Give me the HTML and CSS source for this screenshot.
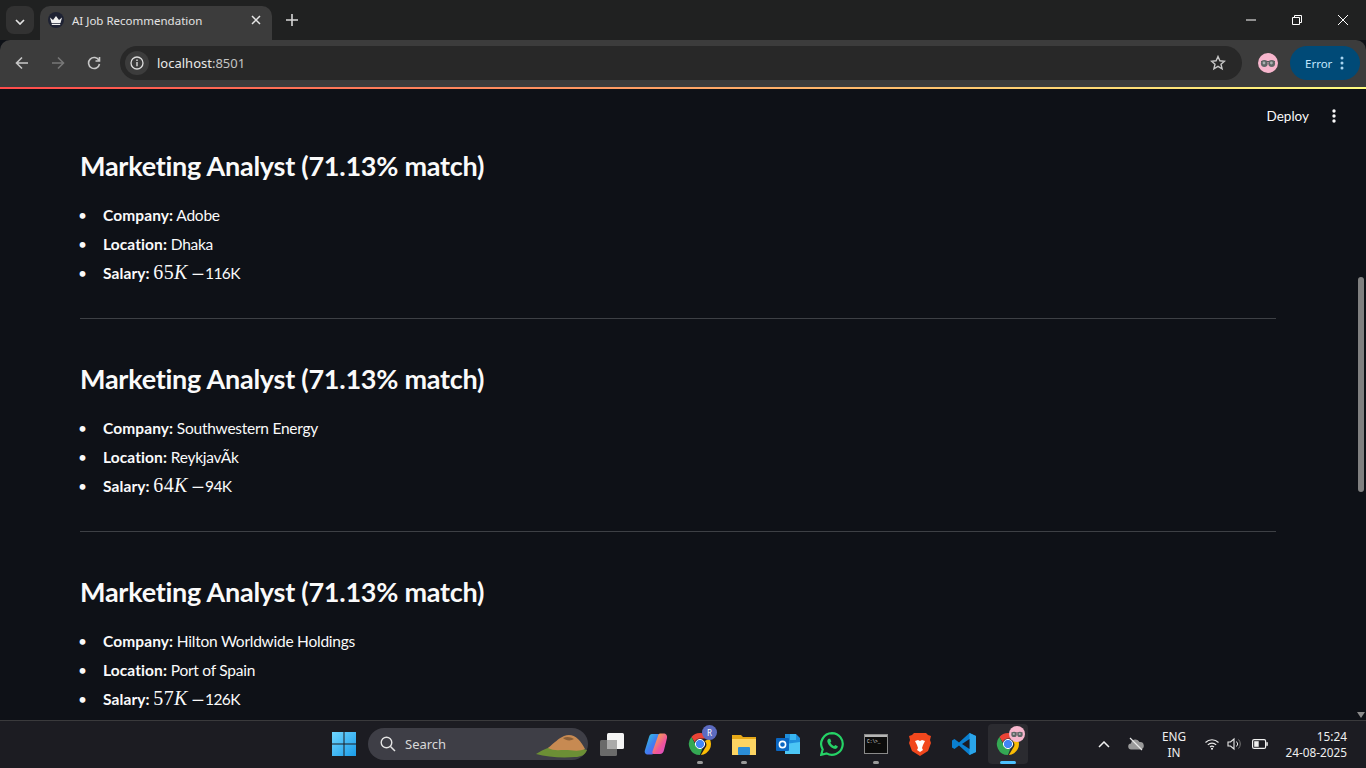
FILE: index.html
```html
<!DOCTYPE html>
<html lang="en">
<head>
    <meta charset="UTF-8">
    <title>AI Job Recommendation</title>
    <link rel="stylesheet" href="styles.css">
</head>
<body>
    <svg class="defs" width="0" height="0">
        <symbol id="chrome" viewBox="0 0 24 24">
            <path d="M12 1a11 11 0 0 1 9.500 5.500H12a5.500 5.500 0 0 0-5.200 3.700L3.400 5A11 11 0 0 1 12 1z" fill="#ea4335"/>
            <path d="M21.500 6.500A11 11 0 0 1 12.900 23l4-6.700A5.500 5.500 0 0 0 16.800 9z" fill="#fbbc04"/>
            <path d="M3.400 5l4.700 8.500a5.500 5.500 0 0 0 6.300 3.200L11.900 23A11 11 0 0 1 3.400 5z" fill="#34a853"/>
            <circle cx="12" cy="12" r="4.600" fill="#4285f4" stroke="#fff" stroke-width="1"/>
        </symbol>
        <symbol id="avatar" viewBox="0 0 20 20">
            <circle cx="10" cy="10" r="10" fill="#f7b6cd"/>
            <path d="M3 8.500h14" stroke="#555" stroke-width="1"/>
            <circle cx="6.300" cy="10.500" r="3.400" fill="#5f6666"/>
            <circle cx="13.700" cy="10.500" r="3.400" fill="#5f6666"/>
            <circle cx="6" cy="10" r="1.400" fill="#aab0b0"/>
            <circle cx="13.400" cy="10" r="1.400" fill="#aab0b0"/>
        </symbol>
    </svg>

    <div class="tabstrip">
        <button class="tab-search">
            <svg width="10" height="6" viewBox="0 0 10 6"><path d="M1 1l4 4 4-4" fill="none" stroke="#e3e3e3" stroke-width="1.700"/></svg>
        </button>
        <div class="tab">
            <span class="favicon">
                <svg width="12" height="9" viewBox="0 0 12 9"><path d="M0 1.500l3 2.500L6 0l3 4 3-2.500L10.500 7h-9zM1.800 7.800h8.400V9H1.800z" fill="#f0f0f0"/></svg>
            </span>
            <span class="tab-title">AI Job Recommendation</span>
            <svg class="tab-close" width="10" height="10" viewBox="0 0 10 10"><path d="M1 1l8 8M9 1l-8 8" stroke="#e6e6e6" stroke-width="1.500"/></svg>
        </div>
        <svg class="new-tab" width="12" height="12" viewBox="0 0 12 12"><path d="M6 0v12M0 6h12" stroke="#d8d8d8" stroke-width="1.600"/></svg>
        <div class="window-controls">
            <svg width="10" height="10" viewBox="0 0 10 10"><path d="M0 5h10" stroke="#fff" stroke-width="1"/></svg>
            <svg width="10" height="10" viewBox="0 0 10 10"><path d="M.5 2.500h7v7h-7zM2.500 2.500V.5h7v7H7.500" fill="none" stroke="#fff" stroke-width="1"/></svg>
            <svg width="10" height="10" viewBox="0 0 10 10"><path d="M0 0l10 10M10 0L0 10" stroke="#fff" stroke-width="1"/></svg>
        </div>
    </div>
    <div class="toolbar">
        <svg class="nav-icon" width="14" height="14" viewBox="0 0 14 14"><path d="M13 7H2M7 1.500L1.500 7 7 12.500" fill="none" stroke="#c7c7c7" stroke-width="1.600"/></svg>
        <svg class="nav-icon" width="14" height="14" viewBox="0 0 14 14"><path d="M1 7h11M7 1.500L12.500 7 7 12.500" fill="none" stroke="#777" stroke-width="1.600"/></svg>
        <svg class="nav-icon" width="14" height="14" viewBox="0 0 14 14"><path d="M12 4.500A5.500 5.500 0 1 0 12.500 8M12.500 1v4h-4" fill="none" stroke="#c7c7c7" stroke-width="1.600"/></svg>
        <div class="omnibox">
            <span class="site-info">
                <svg width="14" height="14" viewBox="0 0 14 14"><circle cx="7" cy="7" r="6" fill="none" stroke="#dcdcdc" stroke-width="1.300"/><path d="M7 6v4.200M7 3.600v1.300" stroke="#dcdcdc" stroke-width="1.400"/></svg>
            </span>
            <span class="url">localhost<span class="url-port">:8501</span></span>
            <svg class="star" width="16" height="16" viewBox="0 0 16 16"><path d="M8 1.500l1.900 4.300 4.600.4-3.500 3 1.100 4.600L8 11.400l-4.100 2.400L5 9.200l-3.500-3 4.600-.4z" fill="none" stroke="#c7c7c7" stroke-width="1.400"/></svg>
        </div>
        <svg class="profile" width="20" height="20"><use href="#avatar"/></svg>
        <div class="error-pill">
            <span>Error</span>
            <svg width="4" height="14" viewBox="0 0 4 14"><circle cx="2" cy="2" r="1.500" fill="#a8d4f0"/><circle cx="2" cy="7" r="1.500" fill="#a8d4f0"/><circle cx="2" cy="12" r="1.500" fill="#a8d4f0"/></svg>
        </div>
    </div>
    <div class="decoration"></div>

    <div class="viewport">
        <main class="content">
            <section class="job">
                <h2>Marketing Analyst (71.13% match)</h2>
                <ul>
                    <li><strong>Company:</strong> Adobe</li>
                    <li><strong>Location:</strong> Dhaka</li>
                    <li><strong>Salary:</strong> <span class="math">65<i>K</i><span class="minus">−</span></span><span class="tail">116K</span></li>
                </ul>
            </section>
            <hr>
            <section class="job">
                <h2>Marketing Analyst (71.13% match)</h2>
                <ul>
                    <li><strong>Company:</strong> Southwestern Energy</li>
                    <li><strong>Location:</strong> ReykjavÃ­k</li>
                    <li><strong>Salary:</strong> <span class="math">64<i>K</i><span class="minus">−</span></span><span class="tail">94K</span></li>
                </ul>
            </section>
            <hr>
            <section class="job">
                <h2>Marketing Analyst (71.13% match)</h2>
                <ul>
                    <li><strong>Company:</strong> Hilton Worldwide Holdings</li>
                    <li><strong>Location:</strong> Port of Spain</li>
                    <li><strong>Salary:</strong> <span class="math">57<i>K</i><span class="minus">−</span></span><span class="tail">126K</span></li>
                </ul>
            </section>
        </main>
        <div class="app-toolbar">
            <span>Deploy</span>
            <svg width="4" height="14" viewBox="0 0 4 14"><circle cx="2" cy="2" r="1.700" fill="#fafafa"/><circle cx="2" cy="7" r="1.700" fill="#fafafa"/><circle cx="2" cy="12" r="1.700" fill="#fafafa"/></svg>
        </div>
        <div class="scrollbar">
            <div class="scroll-thumb"></div>
            <svg class="scroll-arrow" width="8" height="6" viewBox="0 0 8 6"><path d="M0 0h8L4 6z" fill="#8a8a8a"/></svg>
        </div>
    </div>

    <footer class="taskbar">
        <div class="task-item">
            <svg width="24" height="24" viewBox="0 0 24 24">
                <defs><linearGradient id="win" x1="0" y1="0" x2="1" y2="1"><stop offset="0" stop-color="#6fd6ff"/><stop offset="1" stop-color="#1a9be8"/></linearGradient></defs>
                <path d="M0 0h11.500v11.500H0zM12.500 0H24v11.500H12.500zM0 12.500h11.500V24H0zM12.500 12.500H24V24H12.500z" fill="url(#win)"/>
            </svg>
        </div>
        <div class="search-box">
            <svg width="16" height="16" viewBox="0 0 16 16"><circle cx="6.500" cy="6.500" r="5.300" fill="none" stroke="#e4e4e4" stroke-width="1.400"/><path d="M10.500 10.500L15 15" stroke="#e4e4e4" stroke-width="1.500"/></svg>
            <span>Search</span>
            <svg class="search-art" width="52" height="24" viewBox="0 0 52 24">
                <path d="M0 20C8 15 16 12 22 10c8 0 20 3 29 6-2 5-6 7-12 7-14 1-28 0-39-3z" fill="#6c8f35"/>
                <path d="M12 14C18 9 23 4 28 2c5-2 10-1 14 3 3 3 5 6 7 10-6 3-14 1-20 1-6 0-12 1-17-2z" fill="#c78a52"/>
                <path d="M27 4c4-2 8-1 11 1-3 2-8 2-11-1z" fill="#8a5f38"/>
            </svg>
        </div>
        <div class="task-item">
            <svg width="24" height="24" viewBox="0 0 24 24"><rect x="0" y="8" width="17" height="16" rx="1.500" fill="#6a6a6a"/><rect x="7" y="1" width="17" height="16" rx="1.500" fill="#f4f4f4"/><rect x="7" y="8" width="10" height="9" fill="#aaa"/></svg>
        </div>
        <div class="task-item">
            <svg width="24" height="24" viewBox="0 0 24 24">
                <defs>
                    <linearGradient id="cop-a" x1="0" y1="0" x2="1" y2="1"><stop offset="0" stop-color="#2fd0d8"/><stop offset=".5" stop-color="#3f7ff0"/><stop offset="1" stop-color="#7a4cf0"/></linearGradient>
                    <linearGradient id="cop-b" x1="0" y1="0" x2="1" y2="1"><stop offset="0" stop-color="#f6c52c"/><stop offset=".6" stop-color="#f0559a"/><stop offset="1" stop-color="#d04cd8"/></linearGradient>
                </defs>
                <path d="M8 2h6c1.500 0 2 1 1.500 2.500L11 20c-.5 1.500-2 2.500-3.500 2.500H4C1.500 22.500 0 20.500 1 18L5 5c.5-2 1.500-3 3-3z" fill="url(#cop-a)"/>
                <path d="M16 1.500h3.500c2.500 0 4 2 3.500 4.500l-3 12c-.5 2.500-2 4-4 4h-6c-1.500 0-2-1-1.500-2.500L14 4c.3-1.500 1-2.500 2-2.500z" fill="url(#cop-b)"/>
            </svg>
        </div>
        <div class="task-item running">
            <svg width="24" height="24"><use href="#chrome"/></svg>
            <span class="user-badge">R</span>
        </div>
        <div class="task-item running">
            <svg width="24" height="24" viewBox="0 0 24 24"><path d="M0 3h9l2 2h13v18H0z" fill="#e6a817"/><path d="M0 7h24v16H0z" fill="#fcd462"/><rect x="6" y="15" width="12" height="8" rx="1" fill="#2b8ed8"/></svg>
        </div>
        <div class="task-item">
            <svg width="24" height="24" viewBox="0 0 24 24"><path d="M9 2h11l4 4v14H9z" fill="#1f8fdc"/><path d="M14 2h6v6h-6z" fill="#38b6f2"/><path d="M9 12l15-2v12H9z" fill="#4cc6f5"/><rect x="0" y="6" width="13" height="13" rx="1" fill="#0a66c2"/><circle cx="6.500" cy="12.500" r="3.100" fill="none" stroke="#fff" stroke-width="1.600"/></svg>
        </div>
        <div class="task-item">
            <svg width="24" height="24" viewBox="0 0 24 24"><path d="M12 1.200a10.800 10.800 0 0 0-9.300 16.300L1.200 22.800l5.400-1.400A10.800 10.800 0 1 0 12 1.200z" fill="none" stroke="#25d366" stroke-width="2.200"/><path d="M8.500 6.800c-1 .8-1.500 2-1 3.500 1 3 3.500 5.500 6.500 6.500 1.500.4 2.800 0 3.500-1.200l.3-1.300-2.600-1.300-1.100 1.300c-1.500-.6-3-2-3.800-3.700l1-1.200-1.100-2.600z" fill="#25d366"/></svg>
        </div>
        <div class="task-item running">
            <svg width="24" height="20" viewBox="0 0 24 20"><rect x=".5" y=".5" width="23" height="19" fill="#0c0c0c" stroke="#8a8a8a"/><rect x="1" y="1" width="22" height="2" fill="#b5b5b5"/><text x="3" y="9" font-size="4.500" font-family="Liberation Mono" fill="#e0e0e0">C:\&gt;_</text></svg>
        </div>
        <div class="task-item">
            <svg width="22" height="24" viewBox="0 0 22 24"><path d="M5 1h12l2 2 3 1-1 4 1 3-3 8-8 5-8-5-3-8 1-3-1-4 3-1z" fill="#f1471d"/><path d="M6 9l3-1 2 1 2-1 3 1-2 4-1 3 1 2-3 2-3-2 1-2-1-3z" fill="#fff"/></svg>
        </div>
        <div class="task-item">
            <svg width="24" height="24" viewBox="0 0 24 24"><path d="M17.500 1L24 4v16l-6.500 3L7 13.500l-4.500 3.500L0 15.500v-7L2.500 7 7 10.500z" fill="#0a7fd0"/><path d="M17.500 1L24 4v16l-6.500 3z" fill="#2aa5ea"/><path d="M17.500 7v10L10 12z" fill="#1c1c24"/></svg>
        </div>
        <div class="task-item active">
            <svg width="24" height="24"><use href="#chrome"/></svg>
            <svg class="corner-avatar" width="16" height="16"><use href="#avatar"/></svg>
        </div>
        <div class="tray">
            <svg class="tray-caret" width="12" height="7" viewBox="0 0 12 7"><path d="M1 6l5-5 5 5" fill="none" stroke="#f0f0f0" stroke-width="1.500"/></svg>
            <svg class="tray-cloud" width="16" height="14" viewBox="0 0 16 14"><path d="M3.500 12.500a3 3 0 0 1-.5-6 4.500 4.500 0 0 1 8.500-1.500 3.500 3.500 0 0 1 1 7.500z" fill="#9a9a9a"/><path d="M2 1l12 12" stroke="#e8e8e8" stroke-width="1.200"/></svg>
            <div class="tray-lang">ENG<br>IN</div>
            <svg class="tray-wifi" width="14" height="12" viewBox="0 0 14 12"><path d="M.5 4.500a9 9 0 0 1 13 0M2.800 6.800a6 6 0 0 1 8.400 0M5 9a3 3 0 0 1 4 0" fill="none" stroke="#e8e8e8" stroke-width="1.100"/><circle cx="7" cy="10.800" r="1" fill="#fff"/></svg>
            <svg class="tray-volume" width="16" height="14" viewBox="0 0 16 14"><path d="M1 5h2.500L7 2v10L3.500 9H1z" fill="none" stroke="#e8e8e8" stroke-width="1.100"/><path d="M9.500 4.500a3.500 3.500 0 0 1 0 5" fill="none" stroke="#e8e8e8" stroke-width="1"/><path d="M11.500 2.500a6.500 6.500 0 0 1 0 9" fill="none" stroke="#777" stroke-width="1"/></svg>
            <svg class="tray-battery" width="16" height="10" viewBox="0 0 16 10"><rect x=".6" y=".6" width="13" height="8.800" rx="1.500" fill="none" stroke="#f0f0f0" stroke-width="1.200"/><rect x="2.200" y="2.200" width="4.500" height="5.600" fill="#f0f0f0"/><rect x="14.300" y="3.200" width="1.500" height="3.600" fill="#f0f0f0"/></svg>
            <div class="tray-clock">15:24<br>24-08-2025</div>
        </div>
    </footer>
</body>
</html>
```

FILE: styles.css
```css
html, body {
    margin: 0;
    height: 100%;
}
body {
    width: 1366px;
    height: 768px;
    overflow: hidden;
    display: flex;
    flex-direction: column;
    background-color: #0e1117;
    color: #fafafa;
    font-family: "Noto Sans", Arial, sans-serif;
}
.defs {
    position: absolute;
}

/* browser tabs */
.tabstrip {
    height: 40px;
    flex: none;
    display: flex;
    align-items: flex-start;
    background-color: #202121;
}
.tab-search {
    width: 28px;
    height: 28px;
    margin: 6px 6px 0;
    padding: 0;
    border: none;
    border-radius: 8px;
    background-color: #323232;
}
.tab {
    width: 232px;
    height: 34px;
    margin-top: 6px;
    box-sizing: border-box;
    padding: 0 0 6px 8px;
    display: flex;
    align-items: center;
    background-color: #3c3c3c;
    border-radius: 10px 10px 0 0;
}
.favicon {
    width: 16px;
    height: 16px;
    border-radius: 50%;
    background-color: #1e2233;
    display: flex;
    align-items: center;
    justify-content: center;
}
.tab-title {
    margin-left: 8px;
    font-size: 11.5px;
    color: #e3e3e3;
    flex: 1;
    white-space: nowrap;
}
.tab-close {
    margin-right: 11px;
}
.new-tab {
    margin: 14px 0 0 14px;
}
.window-controls {
    margin-left: auto;
    margin-top: 15px;
    display: flex;
    gap: 36px;
    padding-right: 18px;
}

/* address bar */
.toolbar {
    height: 47px;
    flex: none;
    box-sizing: border-box;
    display: flex;
    align-items: center;
    background-color: #3c3c3c;
    border-radius: 10px 10px 0 0;
    padding: 0 0 1px 15px;
}
.nav-icon {
    margin-right: 22px;
}
.omnibox {
    width: 1122px;
    height: 34px;
    margin-left: -3px;
    display: flex;
    align-items: center;
    background-color: #282828;
    border-radius: 17px;
}
.site-info {
    width: 24px;
    height: 24px;
    margin-left: 5px;
    border-radius: 50%;
    background-color: #3c3c3c;
    display: flex;
    align-items: center;
    justify-content: center;
}
.url {
    margin-left: 8px;
    font-size: 13px;
    color: #e8e8e8;
    flex: 1;
}
.url-port {
    color: #c4c4c4;
}
.star {
    margin-right: 16px;
}
.profile {
    margin-left: 16px;
}
.error-pill {
    width: 70px;
    height: 34px;
    margin-left: 12px;
    box-sizing: border-box;
    padding-left: 15px;
    display: flex;
    align-items: center;
    gap: 8px;
    background-color: #004a77;
    border-radius: 17px;
    font-size: 11.5px;
    color: #c2e7ff;
}
.decoration {
    height: 2px;
    flex: none;
    background: linear-gradient(90deg, #ff4b4b, #fffd80);
}

/* streamlit page */
.viewport {
    position: relative;
    flex: 1;
    display: flex;
    overflow: hidden;
    min-height: 0;
}
.content {
    flex: 1;
    padding: 59px 80px 0;
    font-family: "Lato", Arial, sans-serif;
    font-variant-ligatures: none;
}
.job h2 {
    margin: 0;
    font-size: 27px;
    line-height: 36px;
    font-weight: 700;
    letter-spacing: -0.25px;
}
.job ul {
    margin: 19px 0 0;
    padding: 0;
    list-style: none;
    font-size: 15.5px;
    line-height: 25px;
    letter-spacing: -0.25px;
}
.job li + li {
    margin-top: 4px;
}
.job li::before {
    content: "•";
    display: inline-block;
    width: 25px;
    margin-left: -2px;
}
.job strong {
    font-weight: 700;
    letter-spacing: 0.1px;
}
.math {
    font-family: "Liberation Serif", serif;
    font-size: 20px;
    line-height: 0;
    letter-spacing: 0.3px;
}
.minus {
    margin: 0 0 0 4px;
    font-size: 23px;
    vertical-align: -3px;
}
.tail {
    letter-spacing: -0.5px;
}
hr {
    margin: 32px 0 42px;
    height: 1px;
    border: none;
    background-color: #3d4045;
}
.app-toolbar {
    position: absolute;
    top: 19px;
    right: 30px;
    display: flex;
    align-items: center;
    gap: 23px;
    font-family: "Lato", Arial, sans-serif;
    font-size: 13.5px;
}
.scrollbar {
    width: 10px;
    flex: none;
    position: relative;
    background-color: #0e1117;
}
.scroll-thumb {
    width: 6px;
    height: 215px;
    margin: 188px 0 0 2px;
    background-color: #808080;
    border-radius: 3px;
}
.scroll-arrow {
    position: absolute;
    left: 1px;
    bottom: 2px;
}

/* windows taskbar */
.taskbar {
    height: 48px;
    flex: none;
    box-sizing: border-box;
    border-top: 1px solid #3a3a3c;
    padding: 0 0 1px 322px;
    display: flex;
    align-items: center;
    background-color: #1c1c22;
}
.task-item {
    position: relative;
    width: 44px;
    height: 40px;
    flex: none;
    display: flex;
    align-items: center;
    justify-content: center;
    border-radius: 4px;
}
.task-item.running::after,
.task-item.active::after {
    content: "";
    position: absolute;
    left: 19px;
    bottom: 0;
    width: 6px;
    height: 3px;
    border-radius: 2px;
    background-color: #9a9a9a;
}
.task-item.active {
    width: 40px;
    margin-left: 2px;
    background-color: #2b2b30;
}
.task-item.active::after {
    left: 12px;
    width: 16px;
    background-color: #4cc2ff;
}
.user-badge {
    position: absolute;
    top: 1px;
    right: 5px;
    width: 15px;
    height: 15px;
    border-radius: 50%;
    background-color: #5c6bc0;
    font-size: 8px;
    line-height: 15px;
    text-align: center;
    color: #fff;
}
.corner-avatar {
    position: absolute;
    top: 2px;
    right: 3px;
}
.search-box {
    position: relative;
    width: 220px;
    height: 32px;
    flex: none;
    margin: 0 2px;
    box-sizing: border-box;
    padding-left: 12px;
    display: flex;
    align-items: center;
    gap: 9px;
    background-color: #3e3e46;
    border-radius: 16px;
    font-size: 13px;
    color: #d8d8d8;
}
.search-art {
    position: absolute;
    right: 0;
    bottom: 2px;
}
.tray {
    flex: 1;
    height: 100%;
    display: flex;
    align-items: center;
    font-size: 11.8px;
    line-height: 16px;
    color: #f0f0f0;
}
.tray-caret {
    margin-left: 70px;
}
.tray-cloud {
    margin-left: 18px;
}
.tray-lang {
    margin-left: 8px;
    width: 44px;
    text-align: center;
}
.tray-wifi {
    margin-left: 9px;
}
.tray-volume {
    margin-left: 8px;
}
.tray-battery {
    margin-left: 9px;
}
.tray-clock {
    margin-left: auto;
    padding-right: 19px;
    text-align: right;
}
```
